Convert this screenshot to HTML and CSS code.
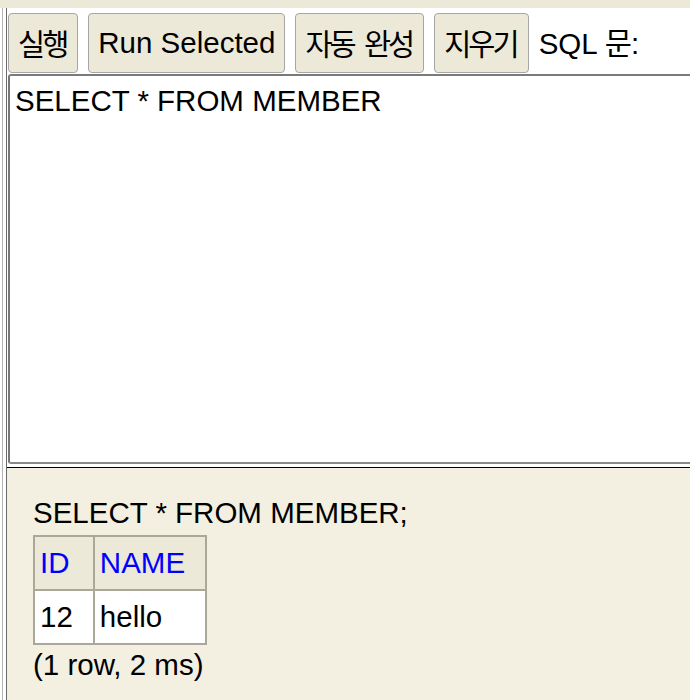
FILE: index.html
```html
<!DOCTYPE html>
<html lang="ko">
<head>
<meta charset="utf-8">
<title>H2 Console</title>
<link rel="stylesheet" href="styles.css">
</head>
<body>
<div class="top"></div>
<div class="frames">
  <div class="edge"><div class="edge-line"></div></div>
  <div class="panes">
    <div class="query">
      <div class="toolbar">
        <button class="btn" type="button"><span class="ko">실행</span></button>
        <button class="btn" type="button">Run Selected</button>
        <button class="btn" type="button"><span class="ko">자동 완성</span></button>
        <button class="btn" type="button"><span class="ko">지우기</span></button>
        <span class="label">SQL <span class="ko">문</span>:</span>
      </div>
      <textarea class="sql" spellcheck="false">SELECT * FROM MEMBER</textarea>
    </div>
    <div class="result">
      <div class="stmt">SELECT * FROM MEMBER;</div>
      <table class="grid">
        <tr><th>ID</th><th>NAME</th></tr>
        <tr><td>12</td><td>hello</td></tr>
      </table>
      <div class="stmt footer">(1 row, 2 ms)</div>
    </div>
  </div>
</div>
</body>
</html>
```

FILE: styles.css
```css
html, body {
  margin: 0;
  padding: 0;
  height: 100%;
  overflow: hidden;
  background: #ffffff;
  font-family: "Liberation Sans", Arial, "Noto Sans CJK KR", sans-serif;
  font-size: 29.5px;
  color: #000;
}
.top {
  height: 8px;
  background: #ece9d8;
}
.frames {
  display: flex;
  height: 692px;
}
.edge {
  padding-left: 2px;
  display: flex;
  background: #fff;
}
.edge-line {
  width: 3px;
  border-left: 1px solid #b4b4b4;
  border-right: 1px solid #6a6a6a;
}
.panes {
  flex: 1;
  display: flex;
  flex-direction: column;
  min-width: 0;
}
.query {
  height: 459px;
  background: #fff;
  display: flex;
  flex-direction: column;
}
.toolbar {
  display: flex;
  align-items: center;
  gap: 10px;
  padding: 5px 0 1px 1px;
}
.btn {
  font-family: inherit;
  font-size: 29.5px;
  line-height: 34px;
  height: 60px;
  padding: 0 9px;
  background: #ece9d8;
  border: 1px solid #a6a6a6;
  border-radius: 4px;
  color: #000;
  margin: 0;
}
.ko {
  font-family: "Noto Sans CJK KR", sans-serif;
  letter-spacing: -3px;
  word-spacing: 5px;
}
.btn .ko {
  margin-right: 2px;
}
.label {
  line-height: 34px;
  margin-top: -2px;
}
.label .ko {
  margin-right: 2px;
}
.sql {
  display: block;
  width: 100%;
  height: 390px;
  margin: 0 0 0 1px;
  padding: 8px 5px;
  box-sizing: border-box;
  font-family: inherit;
  font-size: 29.5px;
  line-height: 34px;
  border: 0;
  border-top: 2px solid #7a7a7a;
  border-bottom: 2px solid #8a8a8a;
  border-left: 2px solid #777;
  border-radius: 3px 0 0 3px;
  resize: none;
  overflow: hidden;
  outline: none;
  background: #fff;
  color: #000;
}
.result {
  flex: 1;
  border-top: 1px solid #000;
  background: #f3efe1;
  padding: 28px 0 0 26px;
}
.stmt {
  line-height: 34px;
}
.footer {
  margin-top: 3px;
}
.grid {
  border-collapse: collapse;
  margin: 5px 0 0 0;
}
.grid th, .grid td {
  border: 2px solid #aca899;
  padding: 9px 20px 9px 5px;
  text-align: left;
  font-weight: normal;
  line-height: 34px;
}
.grid th {
  background: #ece9d8;
  color: #0000ff;
}
.grid td {
  background: #fff;
}
```
